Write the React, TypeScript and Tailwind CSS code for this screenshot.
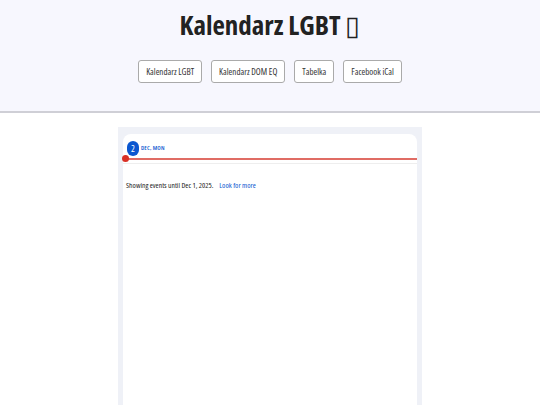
export default function App() {
  const links = ["Kalendarz LGBT", "Kalendarz DOM EQ", "Tabelka", "Facebook iCal"];
  return (
    <div className="min-h-[405px] bg-white font-['Open_Sans',sans-serif] [font-stretch:75%]">
      <header className="h-[113px] bg-[#f7f7fe] border-b-2 border-[#cfcfd6] flex flex-col items-center">
        <h1 className="mt-[6px] text-[27px] leading-[38px] font-bold text-[#222]">
          Kalendarz LGBT <span className="font-light">▯</span>
        </h1>
        <nav className="mt-[16px] flex gap-[9px]">
          {links.map((l) => (
            <a key={l} className="h-[23px] px-[7px] flex items-center text-[9px] text-[#333] bg-white border border-[#aaa] rounded-[3px]">
              {l}
            </a>
          ))}
        </nav>
      </header>
      <main className="mt-[14px] mx-auto w-[304px] bg-[#eff1f7] px-[5px] pt-[7px] h-[280px]">
        <div className="bg-white rounded-t-[8px] h-full">
          <div className="pt-[7px] pl-[4px] flex items-center gap-[2px]">
            <span className="w-[12px] h-[15px] rounded-full bg-[#0b57d0] text-white text-[9px] flex items-center justify-center">2</span>
            <span className="text-[6px] font-semibold tracking-wide text-[#0b57d0]">DEC, MON</span>
          </div>
          <div className="relative mt-[2px] h-[2px] bg-[#e06c64]">
            <span className="absolute -left-[1px] -top-[3px] w-[7px] h-[7px] rounded-full bg-[#d93025]" />
          </div>
          <div className="mt-[3px] h-px bg-[#eee]" />
          <p className="mt-[16px] pl-[3px] text-[7.6px] text-[#222]">
            Showing events until Dec 1, 2025.
            <span className="ml-[6px] text-[#0b57d0]">Look for more</span>
          </p>
        </div>
      </main>
    </div>
  );
}
